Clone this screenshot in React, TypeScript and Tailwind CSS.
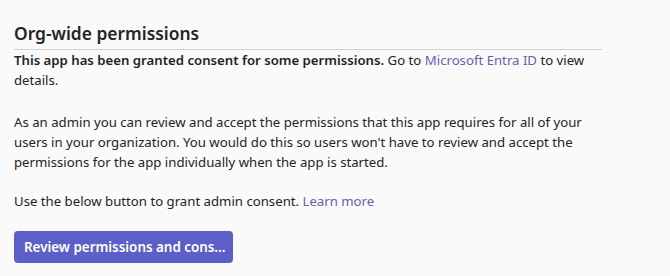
export default function App() {
    return (
        <div
            className="min-h-screen w-full bg-[#fafafa] text-[#242424] px-[14px] pt-[21px]"
            style={{ fontFamily: '"Segoe UI", "Noto Sans", sans-serif' }}
        >
            <div className="w-[588px]">
                <h2 className="border-b border-[#d1d1d1] pb-[4px] text-[17.4px] leading-[24px] font-semibold">
                    Org-wide permissions
                </h2>
                <p className="text-[13.2px] leading-[20px]">
                    <span className="font-semibold">This app has been granted consent for some permissions.</span> Go to{' '}
                    <a href="#" className="text-[#6264a7]">Microsoft Entra ID</a> to view details.
                </p>
                <p className="mt-[22px] text-[13.2px] leading-[20px]">
                    As an admin you can review and accept the permissions that this app requires for all of your users in your
                    organization. You would do this so users won't have to review and accept the permissions for the app
                    individually when the app is started.
                </p>
                <p className="mt-[19px] text-[13.2px] leading-[20px]">
                    Use the below button to grant admin consent.{' '}
                    <a href="#" className="text-[#6264a7]">Learn more</a>
                </p>
                <button className="mt-[20px] h-[32px] w-[219px] whitespace-nowrap overflow-hidden rounded-[4px] bg-[#5b5fc7] pl-[10px] text-left text-[13.4px] font-semibold text-white">
                    Review permissions and cons...
                </button>
            </div>
        </div>
    );
}
